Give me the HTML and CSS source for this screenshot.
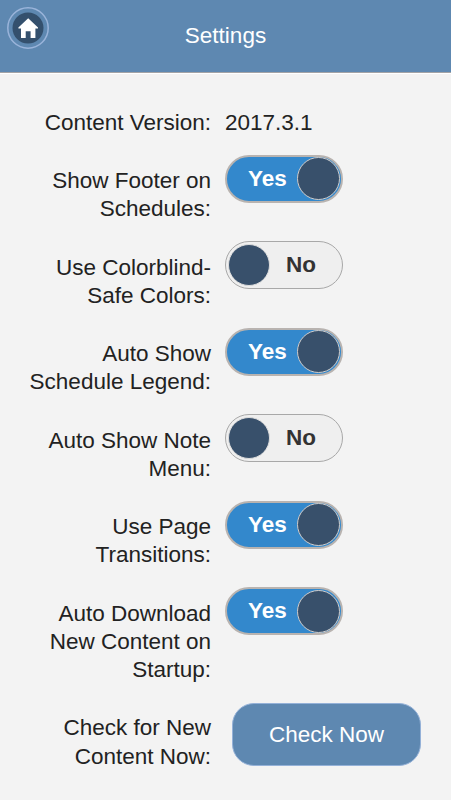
FILE: index.html
```html
<!DOCTYPE html>
<html lang="en">
<head>
  <meta charset="UTF-8" />
  <meta name="viewport" content="width=device-width, initial-scale=1.0"/>
  <title>Settings</title>
  <link rel="stylesheet" href="styles.css">
</head>
<body>
  <header class="header">
    <a class="home-btn" href="#" aria-label="Home">
      <svg width="42" height="42" viewBox="0 0 42 42">
        <circle cx="21" cy="21" r="20.2" fill="none" stroke="#9ab4da" stroke-width="1.5"/>
        <circle cx="21" cy="21" r="15.5" fill="#34506d"/>
        <path d="M21.2 11.2 L31 20.5 V21.4 H28.4 V31 H23.6 V24.2 H18.7 V31 H14 V21.4 H11.4 V20.5 Z" fill="#fff"/>
      </svg>
    </a>
    <h1>Settings</h1>
  </header>

  <main class="settings">
    <div class="row">
      <span class="label">Content Version:</span>
      <span class="value">2017.3.1</span>
    </div>
    <div class="row">
      <span class="label">Show Footer on<br>Schedules:</span>
      <button class="toggle on" role="switch" aria-checked="true"><span class="text">Yes</span><span class="knob"></span></button>
    </div>
    <div class="row">
      <span class="label">Use Colorblind-<br>Safe Colors:</span>
      <button class="toggle" role="switch" aria-checked="false"><span class="knob"></span><span class="text">No</span></button>
    </div>
    <div class="row">
      <span class="label">Auto Show<br>Schedule Legend:</span>
      <button class="toggle on" role="switch" aria-checked="true"><span class="text">Yes</span><span class="knob"></span></button>
    </div>
    <div class="row">
      <span class="label">Auto Show Note<br>Menu:</span>
      <button class="toggle" role="switch" aria-checked="false"><span class="knob"></span><span class="text">No</span></button>
    </div>
    <div class="row">
      <span class="label">Use Page<br>Transitions:</span>
      <button class="toggle on" role="switch" aria-checked="true"><span class="text">Yes</span><span class="knob"></span></button>
    </div>
    <div class="row">
      <span class="label">Auto Download<br>New Content on<br>Startup:</span>
      <button class="toggle on" role="switch" aria-checked="true"><span class="text">Yes</span><span class="knob"></span></button>
    </div>
    <div class="row">
      <span class="label">Check for New<br>Content Now:</span>
      <button class="check-btn">Check Now</button>
    </div>
  </main>

  <script>
    document.querySelectorAll(".toggle").forEach(toggle => {
      toggle.addEventListener("click", () => {
        const on = toggle.classList.toggle("on");
        const text = toggle.querySelector(".text");
        const knob = toggle.querySelector(".knob");
        text.textContent = on ? "Yes" : "No";
        toggle.setAttribute("aria-checked", on);
        toggle.append(on ? knob : text);
      });
    });
  </script>
</body>
</html>
```
FILE: styles.css
```css
* {
  box-sizing: border-box;
}
body {
  margin: 0;
  height: 800px;
  overflow: hidden;
  background: #f3f3f3;
  color: #222;
  font-family: "Liberation Sans", Arial, Helvetica, sans-serif;
  font-size: 22.5px;
  line-height: 28.3px;
}
.header {
  position: relative;
  display: flex;
  align-items: center;
  justify-content: center;
  height: 73px;
  padding-top: 1px;
  background: #5e88b1;
  border-bottom: 1px solid #a3a3a6;
  box-shadow: 0 1px 0 #fff;
}
.header h1 {
  margin: 0;
  font-size: 22.5px;
  font-weight: normal;
  color: #fff;
}
.home-btn {
  position: absolute;
  left: 7px;
  top: 7px;
  height: 42px;
}
.home-btn svg {
  display: block;
}
.settings {
  display: flex;
  flex-direction: column;
  gap: 29.9px;
  padding-top: 36px;
}
.row {
  display: flex;
  align-items: flex-start;
  gap: 14px;
}
.label {
  width: 211px;
  flex-shrink: 0;
  text-align: right;
  white-space: nowrap;
}
.toggle {
  display: flex;
  align-items: center;
  width: 118px;
  height: 48px;
  margin: -12.4px 0 -20px;
  padding: 0 2px;
  border: 1px solid #a8a8a8;
  border-radius: 24px;
  background: #efefef;
  color: #333;
  font: bold 22.5px "Liberation Sans", Arial, Helvetica, sans-serif;
}
.toggle .text {
  flex: 1;
  padding-right: 8px;
  text-align: center;
}
.toggle.on {
  padding: 0 1px;
  border: 2px solid #b8b3b0;
  background: #3388cc;
  color: #fff;
}
.toggle.on .text {
  padding: 0 0 0 10px;
}
.knob {
  width: 42px;
  height: 42px;
  border: 1px solid #ddd;
  border-radius: 50%;
  background: #38506b;
}
.toggle.on .knob {
  width: 43px;
  height: 43px;
  border: 1.5px solid #d0ccca;
}
.check-btn {
  width: 189px;
  height: 63px;
  margin: -11px 0 0 7px;
  border: 1px solid #94b1d8;
  border-radius: 22px;
  background: #5e88b1;
  color: #fff;
  font: 22.5px "Liberation Sans", Arial, Helvetica, sans-serif;
}
```
